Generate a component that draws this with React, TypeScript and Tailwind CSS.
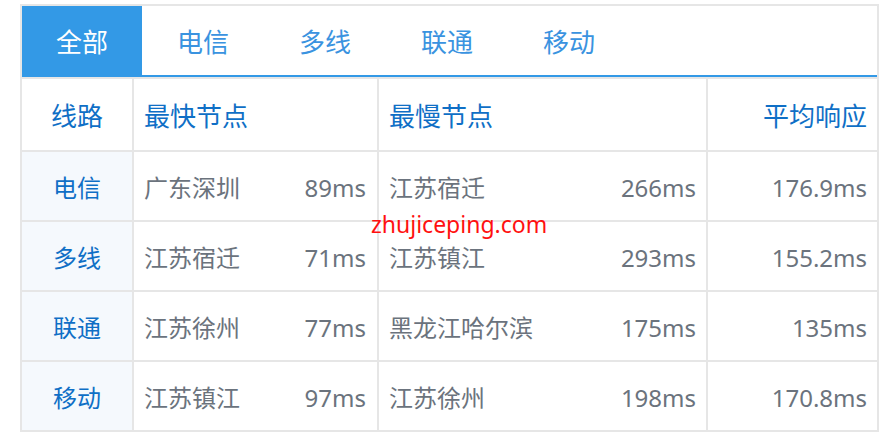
import React from "react";

const rows = [
  { line: "电信", fast: "广东深圳", fastMs: "89ms", slow: "江苏宿迁", slowMs: "266ms", avg: "176.9ms" },
  { line: "多线", fast: "江苏宿迁", fastMs: "71ms", slow: "江苏镇江", slowMs: "293ms", avg: "155.2ms" },
  { line: "联通", fast: "江苏徐州", fastMs: "77ms", slow: "黑龙江哈尔滨", slowMs: "175ms", avg: "135ms" },
  { line: "移动", fast: "江苏镇江", fastMs: "97ms", slow: "江苏徐州", slowMs: "198ms", avg: "170.8ms" },
];

const tabs = ["全部", "电信", "多线", "联通", "移动"];

export default function App() {
  return (
    <div
      className="w-[895px] h-[441px] bg-white pt-[4px] pl-[20px]"
      style={{ fontFamily: "'Noto Sans', 'Noto Sans CJK SC', sans-serif" }}
    >
      <div className="relative w-[859px] border-x-2 border-t-2 border-[#e6e6e6] bg-white">
        <div className="flex h-[71px] border-b-2 border-[#3399e6]">
          {tabs.map((t, i) => (
            <div
              key={t}
              className={
                i === 0
                  ? "w-[120px] flex items-center justify-center pt-[4px] bg-[#3399e6] text-white text-[26px]"
                  : "w-[122px] flex items-center justify-center pt-[4px] text-[#3a93e0] text-[26px]"
              }
            >
              {t}
            </div>
          ))}
        </div>
        <div className="grid grid-cols-[110px_243px_327px_169px] gap-[2px] bg-[#e6e6e6] pt-[2px] pb-[2px] -mx-[2px] px-[2px] text-[24px]">
          <div className="h-[71px] bg-white flex items-center justify-center pt-[4px] text-[26px] text-[#0f6fc6]">线路</div>
          <div className="h-[71px] bg-white flex items-center pl-[10px] pt-[4px] text-[26px] text-[#0f6fc6]">最快节点</div>
          <div className="h-[71px] bg-white flex items-center pl-[10px] pt-[4px] text-[26px] text-[#0f6fc6]">最慢节点</div>
          <div className="h-[71px] bg-white flex items-center justify-end pr-[10px] pt-[4px] text-[26px] text-[#0f6fc6]">平均响应</div>
          {rows.map((r) => (
            <React.Fragment key={r.line}>
              <div className="h-[68px] bg-[#f5f9fd] flex items-center justify-center pt-[4px] text-[#0f6fc6]">{r.line}</div>
              <div className="h-[68px] bg-white flex items-center justify-between pl-[10px] pr-[11px] pt-[4px] text-[#6b737d]">
                <span>{r.fast}</span>
                <span>{r.fastMs}</span>
              </div>
              <div className="h-[68px] bg-white flex items-center justify-between pl-[10px] pr-[10px] pt-[4px] text-[#6b737d]">
                <span>{r.slow}</span>
                <span>{r.slowMs}</span>
              </div>
              <div className="h-[68px] bg-white flex items-center justify-end pr-[10px] pt-[4px] text-[#6b737d]">{r.avg}</div>
            </React.Fragment>
          ))}
        </div>
        <div
          className="absolute left-[349px] top-[207px] text-[23px] leading-none text-[#ff1010]"
          style={{ fontFamily: "'Noto Sans', sans-serif" }}
        >
          zhujiceping.com
        </div>
      </div>
    </div>
  );
}
